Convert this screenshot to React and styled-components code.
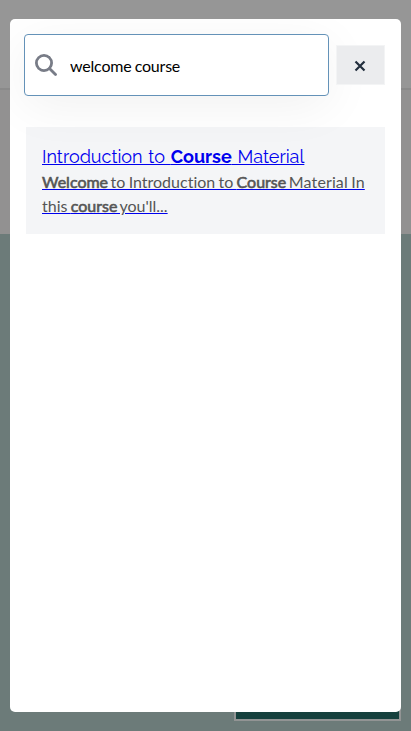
import React from "react";
import styled, { createGlobalStyle } from "styled-components";

const GlobalStyle = createGlobalStyle`
  * { box-sizing: border-box; }
  html, body { margin: 0; height: 100%; overflow: hidden; }
  body { font-family: Lato, sans-serif; }
`;

const Page = styled.div`
  display: flex;
  flex-direction: column;
  height: 731px;
  background: #6c7b79;
`;
const Header = styled.header`
  height: 90px;
  flex: none;
  background: #969696;
  border-bottom: 2px solid #8a8a8a;
`;
const Intro = styled.section`
  height: 144px;
  flex: none;
  background: #929191;
`;
const Hero = styled.main`
  flex: 1;
  display: flex;
  justify-content: flex-end;
  align-items: flex-end;
  padding: 10px;
`;
const HeroButton = styled.div`
  width: 167px;
  height: 50px;
  background: #15403d;
  border: 2px solid #929494;
`;
const Overlay = styled.div`
  position: fixed;
  inset: 0;
  padding: 19px 10px;
  display: flex;
`;
const Dialog = styled.div`
  flex: 1;
  background: #fff;
  border-radius: 5px;
  overflow: hidden;
`;
const SearchRow = styled.div`
  display: flex;
  align-items: center;
  padding: 15px 16px 0 14px;
`;
const SearchField = styled.label`
  display: flex;
  align-items: center;
  width: 305px;
  height: 62px;
  padding-left: 10px;
  border: 1px solid #6492b8;
  border-radius: 4px;
  background: #fff;
  box-shadow: 0 10px 50px rgba(0, 0, 0, 0.06);
`;
const SearchIcon = styled.svg`
  width: 22px;
  height: 22px;
  flex: none;
  fill: none;
  stroke: #787c87;
  stroke-width: 2.8;
  stroke-linecap: round;
`;
const Input = styled.input`
  min-width: 0;
  flex: 1;
  margin: 0 0 0 13px;
  padding: 0;
  border: 0;
  outline: 0;
  background: transparent;
  color: #000;
  font: 16px Lato, sans-serif;
  font-variant-ligatures: none;
  letter-spacing: -0.19px;
  word-spacing: -0.8px;
`;
const CloseButton = styled.button`
  display: flex;
  align-items: center;
  justify-content: center;
  width: 49px;
  height: 40px;
  margin-left: 7px;
  padding: 2px 1px 0 0;
  border: 1px solid #f3f4f5;
  background: #ebecee;
`;
const Result = styled.a`
  display: block;
  height: 107px;
  margin: 31px 16px 0;
  padding: 18px 16px;
  background: #f4f5f7;
  color: #0000ee;
  text-decoration: none;
`;
const Title = styled.div`
  height: 25px;
  white-space: nowrap;
  font: 400 18px/24px Raleway, Lato, sans-serif;
  word-spacing: 1.2px;
  text-decoration: underline;
`;
const Excerpt = styled.div`
  font-size: 16px;
  line-height: 24px;
  white-space: nowrap;
  font-variant-ligatures: none;
  word-spacing: -0.8px;
  text-decoration: underline;
`;
const Gray = styled.span`
  color: #555;
  letter-spacing: ${(p) => p.$tracking || "0"};
`;
const Match = styled.span`
  margin-right: -0.8px;
  -webkit-text-stroke: 0.6px currentColor;
`;

export default function App() {
  return (
    <>
      <GlobalStyle />
      <Page>
        <Header />
        <Intro />
        <Hero><HeroButton /></Hero>
      </Page>
      <Overlay>
        <Dialog role="dialog">
          <SearchRow>
            <SearchField>
              <SearchIcon viewBox="0 0 22 22">
                <circle cx="9" cy="9" r="7.6" />
                <path d="M14.500 14.500L20.500 20.500" />
              </SearchIcon>
              <Input defaultValue="welcome course" aria-label="Search" />
            </SearchField>
            <CloseButton aria-label="Close">
              <svg width="12" height="12" viewBox="0 0 12 12">
                <path d="M1.500 1.500l9 9M10.500 1.500l-9 9" stroke="#222e3d" strokeWidth="2.2" />
              </svg>
            </CloseButton>
          </SearchRow>
          <Result href="#">
            <Title>Introduction to <b>Course</b> Material</Title>
            <Excerpt>
              <Gray><Match>Welcome</Match> to Introduction to <Match>Course</Match></Gray>
              <Gray $tracking="0.12px"> Material In</Gray>
            </Excerpt>
            <Excerpt><Gray>this <Match>course</Match> you'll...</Gray></Excerpt>
          </Result>
        </Dialog>
      </Overlay>
    </>
  );
}
